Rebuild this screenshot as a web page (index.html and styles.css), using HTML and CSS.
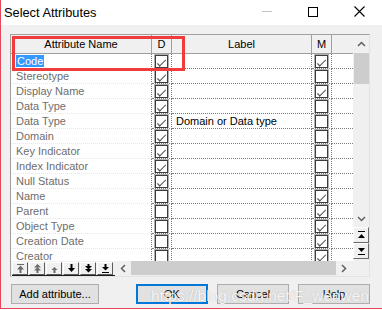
FILE: index.html
```html
<!DOCTYPE html>
<html>
<head>
<meta charset="utf-8">
<link rel="stylesheet" href="styles.css">
</head>
<body>
<div class="window">
  <div class="titlebar">
    <div class="title">Select Attributes</div>
    <div class="ctl"><span class="ic-min"></span></div>
    <div class="ctl"><span class="ic-max"></span></div>
    <div class="ctl"><svg width="11" height="11" viewBox="0 0 11 11"><path d="M0.5 0.5L10.5 10.5M10.5 0.5L0.5 10.5" stroke="#000" stroke-width="1.1" fill="none"/></svg></div>
  </div>

  <div class="frame">
    <div class="top">
      <div class="table">
        <div class="head">
          <div class="hc">Attribute Name</div>
          <div class="hc">D</div>
          <div class="hc">Label</div>
          <div class="hc">M</div>
          <div class="hc last"></div>
        </div>
        <div class="body">
          <div class="row"><div class="c name"><span class="sel">Code</span></div><div class="c chk"><span class="cb on"></span></div><div class="c lbl"></div><div class="c chk"><span class="cb on"></span></div><div class="c ex"></div></div>
          <div class="row"><div class="c name">Stereotype</div><div class="c chk"><span class="cb on"></span></div><div class="c lbl"></div><div class="c chk"><span class="cb"></span></div><div class="c ex"></div></div>
          <div class="row"><div class="c name">Display Name</div><div class="c chk"><span class="cb on"></span></div><div class="c lbl"></div><div class="c chk"><span class="cb on"></span></div><div class="c ex"></div></div>
          <div class="row"><div class="c name">Data Type</div><div class="c chk"><span class="cb on"></span></div><div class="c lbl"></div><div class="c chk"><span class="cb"></span></div><div class="c ex"></div></div>
          <div class="row"><div class="c name">Data Type</div><div class="c chk"><span class="cb on"></span></div><div class="c lbl">Domain or Data type</div><div class="c chk"><span class="cb"></span></div><div class="c ex"></div></div>
          <div class="row"><div class="c name">Domain</div><div class="c chk"><span class="cb on"></span></div><div class="c lbl"></div><div class="c chk"><span class="cb"></span></div><div class="c ex"></div></div>
          <div class="row"><div class="c name">Key Indicator</div><div class="c chk"><span class="cb on"></span></div><div class="c lbl"></div><div class="c chk"><span class="cb"></span></div><div class="c ex"></div></div>
          <div class="row"><div class="c name">Index Indicator</div><div class="c chk"><span class="cb on"></span></div><div class="c lbl"></div><div class="c chk"><span class="cb"></span></div><div class="c ex"></div></div>
          <div class="row"><div class="c name">Null Status</div><div class="c chk"><span class="cb on"></span></div><div class="c lbl"></div><div class="c chk"><span class="cb"></span></div><div class="c ex"></div></div>
          <div class="row"><div class="c name">Name</div><div class="c chk"><span class="cb"></span></div><div class="c lbl"></div><div class="c chk"><span class="cb on"></span></div><div class="c ex"></div></div>
          <div class="row"><div class="c name">Parent</div><div class="c chk"><span class="cb"></span></div><div class="c lbl"></div><div class="c chk"><span class="cb on"></span></div><div class="c ex"></div></div>
          <div class="row"><div class="c name">Object Type</div><div class="c chk"><span class="cb"></span></div><div class="c lbl"></div><div class="c chk"><span class="cb on"></span></div><div class="c ex"></div></div>
          <div class="row"><div class="c name">Creation Date</div><div class="c chk"><span class="cb"></span></div><div class="c lbl"></div><div class="c chk"><span class="cb on"></span></div><div class="c ex"></div></div>
          <div class="row"><div class="c name">Creator</div><div class="c chk"><span class="cb"></span></div><div class="c lbl"></div><div class="c chk"><span class="cb on"></span></div><div class="c ex"></div></div>
        </div>
      </div>
      <div class="vscroll">
        <div class="varrow"><svg width="9" height="6" viewBox="0 0 9 6"><polyline points="1,5 4.5,1.5 8,5" stroke="#606060" stroke-width="1.5" fill="none"/></svg></div>
        <div class="vtrack"><div class="vthumb"></div></div>
        <div class="varrow dn"><svg width="9" height="6" viewBox="0 0 9 6"><polyline points="1,1 4.5,4.5 8,1" stroke="#606060" stroke-width="1.5" fill="none"/></svg></div>
        <div class="vbtn"><svg width="9" height="8" viewBox="0 0 9 8"><rect x="1" y="0" width="7" height="1" fill="#000"/><polygon points="4.5,3 1,7 8,7" fill="#000"/></svg></div>
        <div class="vbtn"><svg width="9" height="8" viewBox="0 0 9 8"><polygon points="1,1 8,1 4.5,5" fill="#000"/><rect x="1" y="7" width="7" height="1" fill="#000"/></svg></div>
        <div class="vspace"></div>
      </div>
    </div>
    <div class="bottom">
      <div class="toolbar">
        <div class="tb dis"><svg width="9" height="9" viewBox="0 0 9 9"><rect x="1" y="0" width="7" height="1"/><polygon points="4.5,1.5 1,5.5 8,5.5"/><rect x="3.5" y="5" width="2" height="4"/></svg></div>
        <div class="tb dis"><svg width="9" height="9" viewBox="0 0 9 9"><polygon points="4.5,0 1,3.5 8,3.5"/><polygon points="4.5,3 1,6.5 8,6.5"/><rect x="3.5" y="6" width="2" height="3"/></svg></div>
        <div class="tb dis"><svg width="9" height="9" viewBox="0 0 9 9"><polygon points="4.5,3 1.5,6 7.5,6"/><rect x="3.5" y="6" width="2" height="3"/></svg></div>
        <div class="tb"><svg width="9" height="9" viewBox="0 0 9 9"><rect x="3.5" y="0" width="2" height="4"/><polygon points="1,4 8,4 4.5,8"/></svg></div>
        <div class="tb"><svg width="9" height="9" viewBox="0 0 9 9"><rect x="3.5" y="0" width="2" height="2.5"/><polygon points="1,2 8,2 4.5,5.5"/><polygon points="1,5 8,5 4.5,8.5"/></svg></div>
        <div class="tb"><svg width="9" height="9" viewBox="0 0 9 9"><rect x="3.5" y="0" width="2" height="3.5"/><polygon points="1,3 8,3 4.5,6.5"/><rect x="1" y="8" width="7" height="1"/></svg></div>
      </div>
      <div class="hscroll">
        <div class="harrow"><svg width="6" height="9" viewBox="0 0 6 9"><polyline points="5,1 1.5,4.5 5,8" stroke="#606060" stroke-width="1.5" fill="none"/></svg></div>
        <div class="hthumb"></div>
        <div class="harrow"><svg width="6" height="9" viewBox="0 0 6 9"><polyline points="1,1 4.5,4.5 1,8" stroke="#606060" stroke-width="1.5" fill="none"/></svg></div>
      </div>
      <div class="corner"></div>
    </div>
  </div>

  <div class="buttons">
    <div class="btn add">Add attribute...</div>
    <div class="btn ok">OK</div>
    <div class="btn">Cancel</div>
    <div class="btn">Help</div>
  </div>

  <div class="highlight-box"></div>
  <div class="watermark">https://blog.csdn.net/F_wenwen</div>
</div>
</body>
</html>
```
FILE: styles.css
```css
* { box-sizing: border-box; margin: 0; padding: 0; }
html, body { background: #fff; }
body {
  width: 382px;
  height: 310px;
  overflow: hidden;
  font-family: "Liberation Sans", Arial, sans-serif;
  font-size: 10.5px;
  color: #000;
}
.window {
  position: relative;
  height: 309px;
  border-left: 1px solid #e5485a;
  border-bottom: 1px solid #e5485a;
  background: #f0f0f0;
  display: flex;
  flex-direction: column;
}
.titlebar {
  height: 25px;
  background: #fff;
  display: flex;
  align-items: center;
}
.title {
  flex: 1;
  padding-left: 3px;
  font-size: 12.8px;
  padding-bottom: 1px;
}
.ctl {
  width: 46px;
  height: 25px;
  display: flex;
  align-items: center;
  justify-content: center;
  padding-bottom: 2px;
}
.ic-min { width: 10px; height: 1px; background: #c4c4c4; }
.ic-max { width: 10px; height: 10px; border: 1px solid #000; }

.frame {
  margin: 9px 0 0 9px;
  width: 360px;
  border: 1px solid #a0a0a0;
  border-right-color: #e3e3e3;
  border-bottom-color: #e3e3e3;
  display: flex;
  flex-direction: column;
}
.top { display: flex; height: 226px; }
.table {
  width: 342px;
  display: flex;
  flex-direction: column;
  background: #fff;
}
.head {
  display: grid;
  grid-template-columns: 141px 20px 140px 20px 21px;
  height: 19px;
  background: #f0f0f0;
  border-bottom: 1px solid #a0a0a0;
}
.hc {
  border-right: 1px solid #a0a0a0;
  text-align: center;
  line-height: 18px;
  font-size: 11px;
}
.hc.last { border-right: none; }
.body { flex: 1; overflow: hidden; }
.row {
  display: grid;
  grid-template-columns: 141px 20px 140px 20px 21px;
  height: 15px;
}
.c {
  border-bottom: 1px dotted #7c7c7c;
  border-right: 1px dotted #7c7c7c;
  line-height: 14px;
  white-space: nowrap;
  overflow: hidden;
  font-size: 11px;
}
.c.name {
  padding-left: 5px;
  color: #6e6e6e;
  border-bottom-color: #e6e6e6;
}
.c.lbl { padding-left: 4px; }
.c.ex { border-right: none; }
.c.chk {
  display: flex;
  align-items: center;
  justify-content: center;
}
.sel {
  display: inline-block;
  background: #3399ff;
  color: #fff;
  padding: 0 1px;
  line-height: 12px;
  margin-top: 1px;
}
.cb {
  width: 13px;
  height: 13px;
  border: 1px solid #3c3c3c;
  background: #fff;
  box-shadow: 0 0 0 1px #b0b0b0;
  display: block;
  position: relative;
}
.cb.on::after {
  content: "";
  position: absolute;
  left: 3px;
  top: 1px;
  width: 6px;
  height: 3px;
  border-left: 1px solid #555;
  border-bottom: 1px solid #555;
  transform: translate(-1px, 3px) rotate(-45deg) scaleX(1.3);
  transform-origin: center;
}

.vscroll {
  width: 16px;
  display: flex;
  flex-direction: column;
  background: #f0f0f0;
}
.varrow {
  height: 18px;
  display: flex;
  align-items: center;
  justify-content: center;
}
.varrow.dn { height: 17px; }
.vtrack { flex: 1; }
.vthumb { height: 31px; margin-left: 1px; width: 15px; background: #cdcdcd; }
.vbtn {
  height: 16px;
  border: 1px solid;
  border-color: #fff #696969 #696969 #fff;
  display: flex;
  align-items: center;
  justify-content: center;
}
.vspace { height: 2px; }

.bottom { display: flex; height: 15px; }
.toolbar {
  width: 103px;
  margin-left: 1px;
  padding-top: 1px;
  display: flex;
  gap: 1px;
  border-bottom: 1px solid #1e1e1e;
}
.tb {
  width: 16px;
  height: 13px;
  border: 1px solid;
  border-color: #fff #5a5a5a #5a5a5a #fff;
  display: flex;
  align-items: center;
  justify-content: center;
  fill: #000;
}
.tb.dis { fill: #6a6a6a; }
.hscroll { width: 237px; display: flex; }
.harrow {
  width: 16px;
  display: flex;
  align-items: center;
  justify-content: center;
}
.hthumb { flex: 1; background: #cdcdcd; margin-bottom: 1px; }
.corner { flex: 1; }

.buttons {
  display: flex;
  margin: 7px 0 0 10px;
}
.btn {
  width: 72px;
  height: 20px;
  background: #e1e1e1;
  border: 1px solid #adadad;
  text-align: center;
  line-height: 18px;
  margin-left: 9px;
  font-size: 11px;
}
.btn.add { width: 88px; margin-left: 0; margin-right: 28px; }
.btn.ok { border: 2px solid #0078d7; line-height: 16px; }

.highlight-box {
  position: absolute;
  left: 11px;
  top: 36px;
  width: 173px;
  height: 35px;
  border: 3px solid #f03c3c;
}
.watermark {
  position: absolute;
  left: 150px;
  top: 287px;
  font-size: 15.5px;
  color: rgba(255, 255, 255, 0.9);
  text-shadow: 0 0 1px rgba(120, 120, 120, 0.5);
  white-space: nowrap;
}
```
